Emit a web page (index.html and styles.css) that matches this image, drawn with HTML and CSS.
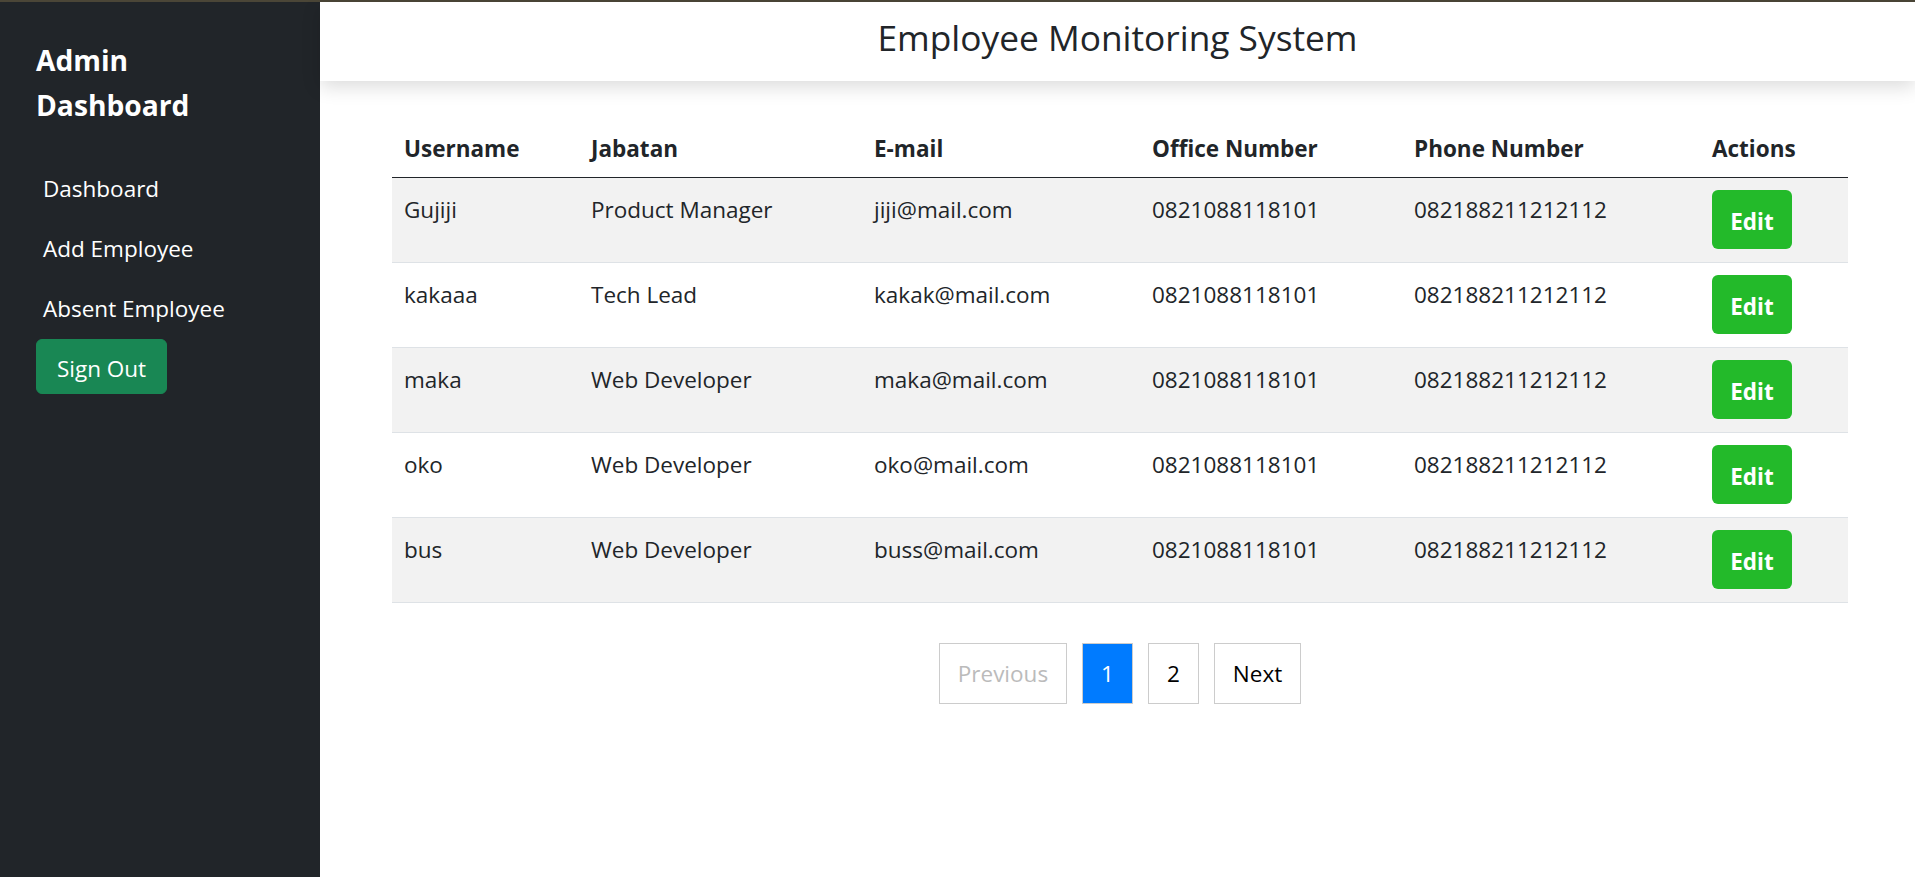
FILE: index.html
```html
<!DOCTYPE html>
<html lang="en">
<head>
<meta charset="utf-8">
<title>Employee Monitoring System</title>
<link rel="stylesheet" href="styles.css">
</head>
<body>
<div class="topline"></div>
<div class="layout">
  <aside class="sidebar">
    <div class="brand">Admin<br>Dashboard</div>
    <nav class="nav">
      <a class="nav-link" href="#">Dashboard</a>
      <a class="nav-link" href="#">Add Employee</a>
      <a class="nav-link" href="#">Absent Employee</a>
    </nav>
    <button class="btn-signout" type="button">Sign Out</button>
  </aside>
  <main class="main">
    <header class="header">
      <h1 class="title">Employee Monitoring System</h1>
    </header>
    <section class="content">
      <table class="table">
        <colgroup>
          <col class="c-user"><col class="c-job"><col class="c-mail"><col class="c-office"><col class="c-phone"><col class="c-act">
        </colgroup>
        <thead>
          <tr><th>Username</th><th>Jabatan</th><th>E-mail</th><th>Office Number</th><th>Phone Number</th><th>Actions</th></tr>
        </thead>
        <tbody>
          <tr><td>Gujiji</td><td>Product Manager</td><td>jiji@mail.com</td><td>0821088118101</td><td>082188211212112</td><td><button class="btn-edit" type="button">Edit</button></td></tr>
          <tr><td>kakaaa</td><td>Tech Lead</td><td>kakak@mail.com</td><td>0821088118101</td><td>082188211212112</td><td><button class="btn-edit" type="button">Edit</button></td></tr>
          <tr><td>maka</td><td>Web Developer</td><td>maka@mail.com</td><td>0821088118101</td><td>082188211212112</td><td><button class="btn-edit" type="button">Edit</button></td></tr>
          <tr><td>oko</td><td>Web Developer</td><td>oko@mail.com</td><td>0821088118101</td><td>082188211212112</td><td><button class="btn-edit" type="button">Edit</button></td></tr>
          <tr><td>bus</td><td>Web Developer</td><td>buss@mail.com</td><td>0821088118101</td><td>082188211212112</td><td><button class="btn-edit" type="button">Edit</button></td></tr>
        </tbody>
      </table>
      <nav class="pagination">
        <span class="page-item disabled">Previous</span>
        <span class="page-item active">1</span>
        <span class="page-item">2</span>
        <span class="page-item">Next</span>
      </nav>
    </section>
  </main>
</div>
</body>
</html>
```
FILE: styles.css
```css
* { box-sizing: border-box; }
html, body { margin: 0; padding: 0; }
body {
  font-family: "Open Sans", "Noto Sans", sans-serif;
  color: #212529;
  background: #fff;
  height: 877px;
  overflow: hidden;
}
.topline { height: 2px; background: #4b4637; }
.layout { display: flex; height: 875px; }

.sidebar {
  width: 320px;
  flex: 0 0 320px;
  background: #212529;
  padding: 36px 0 0 36px;
}
.brand {
  color: #fff;
  font-weight: 700;
  font-size: 28.2px;
  line-height: 45px;
  margin-bottom: 31px;
}
.nav { display: flex; flex-direction: column; }
.nav-link {
  color: #fff;
  text-decoration: none;
  font-size: 22.5px;
  line-height: 36px;
  padding: 12px 7px;
}
.btn-signout {
  display: block;
  font-family: inherit;
  font-size: 22.5px;
  line-height: 36px;
  color: #fff;
  background: #198754;
  border: 1px solid #198754;
  border-radius: 6px;
  padding: 11px 17px 7px;
  width: 131px;
  height: 55px;
  text-align: center;
}

.main { flex: 1; display: flex; flex-direction: column; min-width: 0; }
.header {
  position: relative;
  height: 79px;
  background: #fff;
  text-align: center;
  box-shadow: 0 6px 18px rgba(0, 0, 0, 0.14);
  z-index: 1;
}
.title {
  margin: 0;
  padding-top: 14px;
  font-size: 35.3px;
  line-height: 43px;
  font-weight: 500;
}

.content { padding: 36px 67px 0 72px; }
.table {
  width: 100%;
  border-collapse: collapse;
  table-layout: fixed;
  font-size: 22.5px;
}
.c-user { width: 187px; }
.c-job { width: 283px; }
.c-mail { width: 278px; }
.c-office { width: 262px; }
.c-phone { width: 298px; }
.c-act { width: 148px; }
.table th {
  text-align: left;
  font-weight: 700;
  padding: 14px 12px 10px;
  line-height: 36px;
  border-bottom: 1px solid #212529;
}
.table td {
  padding: 14px 12px 13px;
  line-height: 36px;
  vertical-align: top;
  border-bottom: 1px solid #dee2e6;
  white-space: nowrap;
}
.table tbody tr:nth-child(odd) td { background: #f2f2f2; }
.btn-edit {
  display: block;
  font-family: inherit;
  font-size: 22.5px;
  font-weight: 700;
  line-height: 36px;
  color: #fff;
  background: #23ba2a;
  border: none;
  border-radius: 6px;
  width: 80px;
  height: 59px;
  padding: 5px 0 0;
  margin-top: -2px;
}

.pagination {
  display: flex;
  justify-content: center;
  gap: 15px;
  margin-top: 40px;
}
.page-item {
  display: block;
  border: 1px solid #cccccc;
  font-size: 22.5px;
  line-height: 35px;
  padding: 12px 18px;
  color: #000;
  background: #fff;
}
.page-item.disabled { color: #bbbbbb; }
.page-item.active { background: #007bff; color: #fff; }
```
